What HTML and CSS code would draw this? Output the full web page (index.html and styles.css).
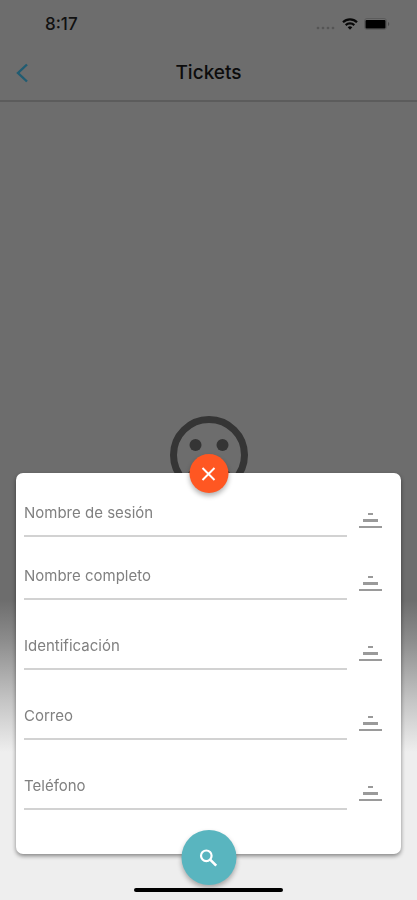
FILE: index.html
```html
<!DOCTYPE html>
<html lang="es">
<head>
<meta charset="utf-8">
<meta name="viewport" content="width=device-width, initial-scale=1">
<title>Tickets</title>
<link rel="stylesheet" href="styles.css">
</head>
<body>
<div class="screen">
  <div class="status">
    <span class="time">8:17</span>
    <div class="status-icons">
      <svg width="20" height="14" viewBox="0 0 20 14" fill="#555"><circle cx="2" cy="11" r="1.3"/><circle cx="7" cy="11" r="1.3"/><circle cx="12" cy="11" r="1.3"/><circle cx="17" cy="11" r="1.3"/></svg>
      <svg width="16" height="12" viewBox="0 0 16 12" fill="none" stroke="#080808" stroke-width="2.2"><path d="M1 4.300a10 10 0 0 1 14 0M3.700 7.100a6.200 6.200 0 0 1 8.600 0"/><path d="M8 11.700 5.700 9.300a3.300 3.300 0 0 1 4.600 0Z" fill="#080808" stroke="none"/></svg>
      <svg width="26" height="12" viewBox="0 0 26 12"><rect x=".5" y=".5" width="22" height="11" rx="2.5" fill="none" stroke="#5c5c5c"/><rect x="1.500" y="2" width="20" height="8.500" rx="1" fill="#000"/><path d="M24 4v4c1.700-.7 1.700-3.300 0-4" fill="#4b4b4b"/></svg>
    </div>
  </div>
  <header class="bar">
    <button class="back" aria-label="Volver"><svg width="14" height="22" viewBox="0 0 14 22" fill="none" stroke="#205c72" stroke-width="2.400"><path d="M12 2.500 3 11l9 8.500"/></svg></button>
    <h1>Tickets</h1>
  </header>
  <main class="empty">
    <svg width="78" height="78" viewBox="0 0 78 78"><circle cx="39" cy="39" r="35.500" fill="none" stroke="#353535" stroke-width="7"/><circle cx="25.500" cy="29" r="6" fill="#353535"/><circle cx="52.500" cy="29" r="6" fill="#353535"/><path d="M20 60a21 21 0 0 1 38 0" fill="none" stroke="#353535" stroke-width="6"/></svg>
  </main>
</div>

<div class="modal">
  <form class="sheet" role="search">
    <button type="button" class="round close" aria-label="Cerrar"><svg width="16" height="16" viewBox="0 0 16 16" stroke="#fff" stroke-width="2"><path d="m2 2 12 12M14 2 2 14"/></svg></button>

    <div class="row first">
      <div class="field"><label for="sesion">Nombre de sesión</label><input id="sesion" type="text"></div>
      <button type="button" class="filter" aria-label="Filtrar nombre de sesión"><svg width="24" height="18" viewBox="0 0 24 18"><path d="M10 1h5v2h-5zM5 7h15v3H5zM1 14h23v2H1z"/></svg></button>
    </div>
    <div class="row">
      <div class="field"><label for="nombre">Nombre completo</label><input id="nombre" type="text"></div>
      <button type="button" class="filter" aria-label="Filtrar nombre completo"><svg width="24" height="18" viewBox="0 0 24 18"><path d="M10 1h5v2h-5zM5 7h15v3H5zM1 14h23v2H1z"/></svg></button>
    </div>
    <div class="row">
      <div class="field"><label for="ident">Identificación</label><input id="ident" type="text"></div>
      <button type="button" class="filter" aria-label="Filtrar identificación"><svg width="24" height="18" viewBox="0 0 24 18"><path d="M10 1h5v2h-5zM5 7h15v3H5zM1 14h23v2H1z"/></svg></button>
    </div>
    <div class="row">
      <div class="field"><label for="correo">Correo</label><input id="correo" type="email"></div>
      <button type="button" class="filter" aria-label="Filtrar correo"><svg width="24" height="18" viewBox="0 0 24 18"><path d="M10 1h5v2h-5zM5 7h15v3H5zM1 14h23v2H1z"/></svg></button>
    </div>
    <div class="row">
      <div class="field"><label for="tel">Teléfono</label><input id="tel" type="tel"></div>
      <button type="button" class="filter" aria-label="Filtrar teléfono"><svg width="24" height="18" viewBox="0 0 24 18"><path d="M10 1h5v2h-5zM5 7h15v3H5zM1 14h23v2H1z"/></svg></button>
    </div>

    <button type="submit" class="round search" aria-label="Buscar"><svg width="18" height="18" viewBox="0 0 18 18" fill="none" stroke="#fff" stroke-width="2.200"><circle cx="6.800" cy="6.800" r="5.300"/><path d="m10.700 10.700 6 6" stroke-width="2.600"/></svg></button>
  </form>
  <div class="home"></div>
</div>
</body>
</html>
```
FILE: styles.css
```css
* {
  box-sizing: border-box;
}

body {
  margin: 0;
  font-family: Inter, "Liberation Sans", sans-serif;
}

button {
  padding: 0;
  border: 0;
  background: none;
}

svg {
  display: block;
}

.screen {
  display: flex;
  flex-direction: column;
  min-height: 100vh;
  background: linear-gradient(#6d6d6d 600px, #8c8c8c 640px, #c4c4c4 700px, #eee 752px);
}

.status {
  display: flex;
  align-items: center;
  justify-content: space-between;
  height: 48px;
  padding: 0 27px 0 45px;
}

.time {
  font-size: 17px;
  line-height: 20px;
  font-weight: 500;
  color: #111;
}

.status-icons {
  display: flex;
  align-items: center;
  gap: 6px;
}

.bar {
  display: grid;
  grid-template-columns: 44px 1fr 44px;
  align-items: center;
  height: 54px;
  padding-bottom: 2px;
  border-bottom: 2px solid #5c5c5c;
}

.back {
  display: grid;
  place-items: center;
  height: 44px;
}

.bar h1 {
  margin: 0;
  font-size: 19px;
  line-height: 24px;
  font-weight: 500;
  text-align: center;
  color: #0c0c0c;
}

.empty {
  display: grid;
  flex: 1;
  place-items: center;
  padding-bottom: 92px;
}

.modal {
  position: fixed;
  inset: 0;
  display: flex;
  flex-direction: column;
  justify-content: flex-end;
  padding: 0 16px 8px;
}

.sheet {
  position: relative;
  display: flex;
  flex-direction: column;
  gap: 22px;
  margin-bottom: 34px;
  padding: 16px 8px 44px;
  border-radius: 7px;
  background: #fff;
  box-shadow: 0 2px 4px rgba(0, 0, 0, 0.45);
}

.row {
  display: grid;
  grid-template-columns: 1fr 46px;
  align-items: end;
}

.first {
  margin-bottom: -7px;
}

.field {
  display: grid;
  align-items: center;
}

.field label,
.field input {
  grid-area: 1 / 1;
}

.field label {
  font-size: 15px;
  line-height: 20px;
  color: #808080;
}

.field input {
  width: 100%;
  height: 48px;
  padding: 0;
  border: 0;
  border-bottom: 2px solid #d2d2d2;
  background: transparent;
  font: inherit;
  outline: 0;
}

.filter {
  display: grid;
  place-items: center;
  height: 32px;
  fill: #9a9a9a;
}

.round {
  position: absolute;
  left: 50%;
  display: grid;
  place-items: center;
  border-radius: 50%;
  transform: translateX(-50%);
  box-shadow: 0 3px 5px rgba(0, 0, 0, 0.3);
}

.close {
  top: -19px;
  width: 39px;
  height: 39px;
  background: #ff5722;
}

.search {
  bottom: -31px;
  width: 55px;
  height: 55px;
  background: #59b5bf;
}

.home {
  position: relative;
  align-self: center;
  width: 149px;
  height: 4px;
  border-radius: 2px;
  background: #000;
}
```
